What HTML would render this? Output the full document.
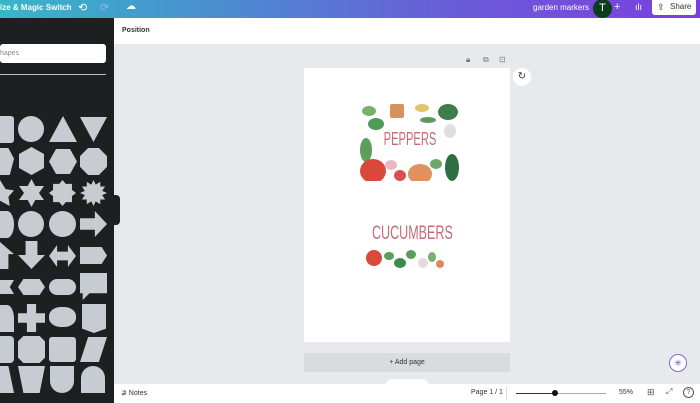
<!DOCTYPE html><html><head><style>
*{margin:0;padding:0;box-sizing:border-box}
body{width:700px;height:403px;overflow:hidden;position:relative;font-family:"Liberation Sans",sans-serif;background:#e8e9ec}
.a{position:absolute}
.s{position:absolute;background:#c6ccd2}
.b{position:absolute;border-radius:50%}
</style></head><body>
<div class="a" style="left:0;top:0;width:700px;height:18px;background:linear-gradient(90deg,#38b6c9 0%,#4a8fd0 30%,#6a5bd8 65%,#7b3fe0 100%)"></div>
<div class="a" style="left:0;top:3px;color:#fff;font-size:8px;font-weight:bold">ize &amp; Magic Switch</div>
<div class="a" style="left:78px;top:1px;color:#fff;font-size:11px">⟲</div>
<div class="a" style="left:100px;top:1px;color:#8fb8e8;font-size:11px">⟳</div>
<div class="a" style="left:126px;top:1px;color:#fff;font-size:10px">☁</div>
<div class="a" style="left:533px;top:3px;color:#fff;font-size:8px">garden markers</div>
<div class="a" style="left:593px;top:-1px;width:19px;height:19px;border-radius:50%;background:#0c3d1b;color:#fff;font-size:11px;text-align:center;line-height:19px">T</div>
<div class="a" style="left:614px;top:1px;color:#fff;font-size:11px">+</div>
<div class="a" style="left:635px;top:2px;color:#fff;font-size:9px">ılı</div>
<div class="a" style="left:652px;top:-2px;width:44px;height:17px;background:#fff;border-radius:3px;font-size:8px;color:#333;line-height:18px;padding-left:18px">Share</div>
<div class="a" style="left:657px;top:2px;font-size:9px;color:#333">⇪</div>
<div class="a" style="left:0;top:18px;width:114px;height:385px;background:#1e1f21"></div>
<div class="a" style="left:0;top:44px;width:106px;height:19px;background:#fff;border-radius:3px;font-size:7px;color:#888;line-height:19px">hapes</div>
<div class="a" style="left:0;top:74px;width:106px;height:1px;background:#bbb"></div>
<div class="a" style="left:114px;top:18px;width:586px;height:26px;background:#fff"></div>
<div class="a" style="left:122px;top:27px;font-size:7px;font-weight:bold;color:#333">Position</div>
<!-- shapes -->
<div class="s" style="left:0;top:116px;width:14px;height:27px;border-radius:0 3px 3px 0"></div>
<div class="s" style="left:18px;top:116px;width:26px;height:26px;border-radius:50%"></div>
<div class="s" style="left:49px;top:116px;width:28px;height:26px;clip-path:polygon(50% 0,100% 100%,0 100%)"></div>
<div class="s" style="left:80px;top:117px;width:27px;height:25px;clip-path:polygon(0 0,100% 0,50% 100%)"></div>
<div class="s" style="left:0;top:148px;width:14px;height:27px;clip-path:polygon(0 0,60% 0,100% 40%,70% 100%,0 100%)"></div>
<div class="s" style="left:19px;top:147px;width:25px;height:28px;clip-path:polygon(50% 0,100% 25%,100% 75%,50% 100%,0 75%,0 25%)"></div>
<div class="s" style="left:49px;top:149px;width:28px;height:25px;clip-path:polygon(25% 0,75% 0,100% 50%,75% 100%,25% 100%,0 50%)"></div>
<div class="s" style="left:80px;top:148px;width:27px;height:27px;clip-path:polygon(30% 0,70% 0,100% 30%,100% 70%,70% 100%,30% 100%,0 70%,0 30%)"></div>
<div class="s" style="left:0;top:180px;width:14px;height:26px;clip-path:polygon(0 0,40% 35%,100% 40%,60% 65%,70% 100%,0 80%)"></div>
<div class="s" style="left:19px;top:179px;width:25px;height:28px;clip-path:polygon(50% 0,65% 25%,100% 25%,80% 50%,100% 75%,65% 75%,50% 100%,35% 75%,0 75%,20% 50%,0 25%,35% 25%)"></div>
<div class="s" style="left:49px;top:180px;width:27px;height:26px;clip-path:polygon(50% 0,62% 15%,85% 15%,85% 38%,100% 50%,85% 62%,85% 85%,62% 85%,50% 100%,38% 85%,15% 85%,15% 62%,0 50%,15% 38%,15% 15%,38% 15%)"></div>
<div class="s" style="left:80px;top:180px;width:27px;height:26px;clip-path:polygon(50% 0,58% 18%,75% 7%,75% 25%,93% 25%,82% 42%,100% 50%,82% 58%,93% 75%,75% 75%,75% 93%,58% 82%,50% 100%,42% 82%,25% 93%,25% 75%,7% 75%,18% 58%,0 50%,18% 42%,7% 25%,25% 25%,25% 7%,42% 18%)"></div>
<div class="s" style="left:0;top:211px;width:14px;height:27px;border-radius:0 50% 50% 0"></div>
<div class="s" style="left:18px;top:211px;width:26px;height:26px;border-radius:50%"></div>
<div class="s" style="left:49px;top:211px;width:27px;height:26px;border-radius:50%"></div>
<div class="s" style="left:80px;top:211px;width:27px;height:26px;clip-path:polygon(0 28%,55% 28%,55% 0,100% 50%,55% 100%,55% 72%,0 72%)"></div>
<div class="s" style="left:0;top:242px;width:14px;height:27px;clip-path:polygon(0 0,100% 45%,60% 45%,60% 100%,0 100%)"></div>
<div class="s" style="left:18px;top:241px;width:27px;height:28px;clip-path:polygon(28% 0,72% 0,72% 50%,100% 50%,50% 100%,0 50%,28% 50%)"></div>
<div class="s" style="left:49px;top:245px;width:27px;height:22px;clip-path:polygon(0 50%,30% 0,30% 30%,70% 30%,70% 0,100% 50%,70% 100%,70% 70%,30% 70%,30% 100%)"></div>
<div class="s" style="left:80px;top:247px;width:27px;height:17px;clip-path:polygon(0 0,80% 0,100% 50%,80% 100%,0 100%)"></div>
<div class="s" style="left:0;top:280px;width:14px;height:14px;clip-path:polygon(0 0,100% 0,70% 50%,100% 100%,0 100%)"></div>
<div class="s" style="left:18px;top:279px;width:27px;height:16px;clip-path:polygon(20% 0,80% 0,100% 50%,80% 100%,20% 100%,0 50%)"></div>
<div class="s" style="left:49px;top:279px;width:27px;height:16px;border-radius:8px"></div>
<div class="s" style="left:80px;top:273px;width:27px;height:27px;clip-path:polygon(0 0,100% 0,100% 75%,35% 75%,10% 100%,10% 75%,0 75%)"></div>
<div class="s" style="left:0;top:305px;width:14px;height:27px;border-radius:0 50% 0 0"></div>
<div class="s" style="left:18px;top:304px;width:27px;height:28px;clip-path:polygon(33% 0,67% 0,67% 33%,100% 33%,100% 67%,67% 67%,67% 100%,33% 100%,33% 67%,0 67%,0 33%,33% 33%)"></div>
<div class="s" style="left:49px;top:307px;width:27px;height:20px;border-radius:45%"></div>
<div class="s" style="left:82px;top:304px;width:24px;height:29px;clip-path:polygon(0 0,100% 0,100% 85%,50% 100%,0 85%)"></div>
<div class="s" style="left:0;top:336px;width:14px;height:27px;border-radius:0 4px 4px 0"></div>
<div class="s" style="left:18px;top:336px;width:27px;height:27px;clip-path:polygon(20% 0,80% 0,100% 20%,100% 80%,80% 100%,20% 100%,0 80%,0 20%)"></div>
<div class="s" style="left:49px;top:337px;width:27px;height:25px;border-radius:3px"></div>
<div class="s" style="left:80px;top:337px;width:27px;height:25px;clip-path:polygon(30% 0,100% 0,70% 100%,0 100%)"></div>
<div class="s" style="left:0;top:366px;width:14px;height:27px;clip-path:polygon(0 0,60% 0,100% 100%,0 100%)"></div>
<div class="s" style="left:18px;top:366px;width:27px;height:27px;clip-path:polygon(0 0,100% 0,80% 100%,20% 100%)"></div>
<div class="s" style="left:50px;top:366px;width:24px;height:27px;border-radius:0 0 12px 12px"></div>
<div class="s" style="left:81px;top:366px;width:24px;height:27px;border-radius:12px 12px 0 0"></div>
<div class="a" style="left:114px;top:195px;width:6px;height:30px;background:#1e1f21;border-radius:0 4px 4px 0"></div>
<!-- page -->
<div class="a" style="left:466px;top:55px;font-size:8px;color:#777">🔒︎</div>
<div class="a" style="left:483px;top:55px;font-size:8px;color:#777">⧉</div>
<div class="a" style="left:499px;top:55px;font-size:8px;color:#777">⊡</div>
<div class="a" style="left:304px;top:68px;width:206px;height:274px;background:#fff"></div>
<div class="a" style="left:513px;top:68px;width:18px;height:18px;border-radius:50%;background:#fff;font-size:10px;text-align:center;line-height:18px;color:#333">↻</div>
<div class="a" style="left:360px;top:104px;width:100px;height:77px;background:#fff;overflow:hidden">
 <div class="b" style="left:2px;top:2px;width:14px;height:10px;background:#7bb06a"></div>
 <div class="b" style="left:8px;top:14px;width:16px;height:12px;background:#4f9a55"></div>
 <div class="a" style="left:30px;top:0;width:14px;height:14px;background:#d9905a;border-radius:2px"></div>
 <div class="b" style="left:55px;top:0;width:14px;height:8px;background:#e2c56e"></div>
 <div class="b" style="left:60px;top:13px;width:16px;height:6px;background:#5c9a5c"></div>
 <div class="b" style="left:78px;top:0;width:20px;height:16px;background:#3f7d4c"></div>
 <div class="b" style="left:84px;top:20px;width:12px;height:14px;background:#e2dde2"></div>
 <div class="b" style="left:0;top:34px;width:12px;height:24px;background:#5d9e5a"></div>
 <div class="b" style="left:85px;top:50px;width:14px;height:27px;background:#2f6e40"></div>
 <div class="b" style="left:0;top:55px;width:26px;height:24px;background:#d9483b"></div>
 <div class="b" style="left:25px;top:56px;width:12px;height:10px;background:#e9b8c2"></div>
 <div class="b" style="left:34px;top:66px;width:12px;height:11px;background:#d85050"></div>
 <div class="b" style="left:48px;top:60px;width:24px;height:20px;background:#e0915e"></div>
 <div class="b" style="left:70px;top:55px;width:12px;height:10px;background:#6da86a"></div>
</div>
<div class="a" style="left:360px;top:129px;width:100px;text-align:center;font-size:18px;color:#c86a78;transform:scaleX(.62)">PEPPERS</div>
<div class="a" style="left:355px;top:223px;width:100px;text-align:center;font-size:19px;color:#c86a78;transform:scaleX(.66)">CUCUMBERS</div>
<div class="a" style="left:366px;top:248px;width:78px;height:22px;background:#fff;overflow:hidden">
 <div class="b" style="left:0;top:2px;width:16px;height:16px;background:#d84a3c"></div>
 <div class="b" style="left:18px;top:4px;width:10px;height:8px;background:#5a9e5a"></div>
 <div class="b" style="left:28px;top:10px;width:12px;height:10px;background:#3f8a4a"></div>
 <div class="b" style="left:40px;top:2px;width:10px;height:9px;background:#5a9e5a"></div>
 <div class="b" style="left:52px;top:10px;width:10px;height:10px;background:#e0dce0"></div>
 <div class="b" style="left:62px;top:4px;width:8px;height:10px;background:#79b070"></div>
 <div class="b" style="left:70px;top:12px;width:8px;height:8px;background:#e08a5a"></div>
</div>
<div class="a" style="left:304px;top:353px;width:206px;height:19px;background:#d9dbde;font-size:7px;color:#333;text-align:center;line-height:19px">+ Add page</div>
<div class="a" style="left:669px;top:354px;width:18px;height:18px;border-radius:50%;background:#fff;border:1px solid #7a6ad8;font-size:9px;text-align:center;line-height:16px;color:#5a4ad0">✳</div>
<div class="a" style="left:114px;top:384px;width:586px;height:19px;background:#fff"></div>
<div class="a" style="left:385px;top:379px;width:44px;height:8px;background:#fff;border-radius:8px 8px 0 0"></div>
<div class="a" style="left:121px;top:389px;font-size:7px;color:#333">⊉ Notes</div>
<div class="a" style="left:471px;top:389px;font-size:7px;color:#333">Page 1 / 1</div>
<div class="a" style="left:506px;top:386px;width:1px;height:14px;background:#ddd"></div>
<div class="a" style="left:516px;top:393px;width:90px;height:1px;background:#aaa"></div>
<div class="a" style="left:516px;top:393px;width:38px;height:1px;background:#333"></div>
<div class="a" style="left:552px;top:390px;width:6px;height:6px;border-radius:50%;background:#111"></div>
<div class="a" style="left:619px;top:389px;font-size:7px;color:#333">55%</div>
<div class="a" style="left:647px;top:387px;font-size:9px;color:#555">⊞</div>
<div class="a" style="left:666px;top:387px;font-size:8px;color:#555">⤢</div>
<div class="a" style="left:683px;top:387px;width:11px;height:11px;border-radius:50%;border:1px solid #555;font-size:7px;text-align:center;line-height:9px;color:#555">?</div>
</body></html>
